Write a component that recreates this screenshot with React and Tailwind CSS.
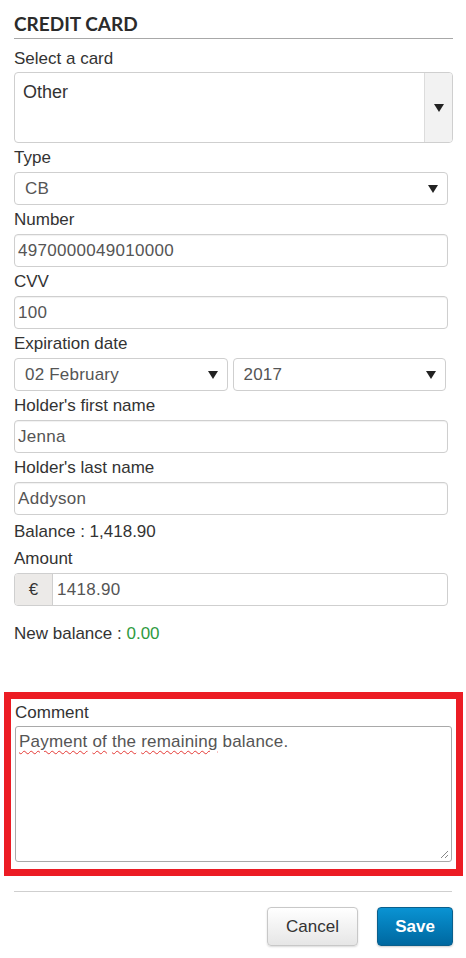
import React from "react";

const Arrow = ({ className = "" }) => (
  <svg width="10" height="8" viewBox="0 0 10 8" className={className}>
    <path d="M0 0 L10 0 L5 8 Z" fill="#222" />
  </svg>
);

function Label({ children }) {
  return <div className="pt-[5px] pb-[4px] text-[17px] leading-[20px] text-[#333]">{children}</div>;
}

function TextBox({ value, className = "" }) {
  return (
    <div
      className={`h-[33px] flex items-center pl-[3px] border border-[#cfcfcf] rounded-[4px] bg-white text-[17px] tracking-[0.3px] text-[#555] shadow-[inset_0_1px_1px_rgba(0,0,0,0.06)] ${className}`}
    >
      {value}
    </div>
  );
}

function SelectBox({ value, className = "" }) {
  return (
    <div
      className={`h-[33px] flex items-center justify-between pl-[10px] pr-[9px] border border-[#cfcfcf] rounded-[4px] bg-white text-[17px] tracking-[0.2px] text-[#555] ${className}`}
    >
      <span>{value}</span>
      <Arrow />
    </div>
  );
}

export default function App() {
  return (
    <div
      className="w-[466px] h-[958px] bg-white overflow-hidden"
      style={{ fontFamily: '"Liberation Sans", Arial, sans-serif' }}
    >
      <div className="pl-[14px] pr-[13px]">
        <div className="pt-[12px] pb-[2px] border-b border-[#a8a8a8]">
          <h1
            className="text-[19px] leading-[24px] font-bold text-[#2b2b2b]"
            style={{ fontFamily: "Lato, sans-serif" }}
          >
            CREDIT CARD
          </h1>
        </div>

        <div className="pt-[10px] pb-[3px] text-[17px] leading-[20px] text-[#333]">Select a card</div>
        <div className="h-[71px] flex border border-[#cfcfcf] rounded-[4px] bg-white overflow-hidden">
          <div className="flex-1 pl-[8px] pt-[9px] text-[18px] leading-[20px] text-[#333]">Other</div>
          <div className="w-[28px] flex items-center justify-center border-l border-[#dcdcdc] bg-[#f2f2f2]">
            <Arrow />
          </div>
        </div>

        <div className="mr-[5px]">
          <Label>Type</Label>
          <SelectBox value="CB" />

          <Label>Number</Label>
          <TextBox value="4970000049010000" />

          <Label>CVV</Label>
          <TextBox value="100" />

          <Label>Expiration date</Label>
          <div className="flex gap-[5px] mr-[2px]">
            <SelectBox value="02 February" className="flex-1" />
            <SelectBox value="2017" className="flex-1" />
          </div>

          <Label>Holder's first name</Label>
          <TextBox value="Jenna" />

          <Label>Holder's last name</Label>
          <TextBox value="Addyson" />

          <div className="pt-[7px] text-[17px] leading-[20px] text-[#333]">Balance : 1,418.90</div>
          <div className="pt-[7px] pb-[4px] text-[17px] leading-[20px] text-[#333]">Amount</div>
          <div className="h-[33px] flex border border-[#cfcfcf] rounded-[4px] bg-white overflow-hidden">
            <div className="w-[38px] flex items-center justify-center bg-[#eceae8] border-r border-[#cfcfcf] text-[17px] text-[#333]">
              €
            </div>
            <div className="flex-1 flex items-center pl-[4px] text-[17px] tracking-[0.3px] text-[#555]">1418.90</div>
          </div>

          <div className="pt-[18px] text-[17px] leading-[20px] text-[#333]">
            New balance : <span className="text-[#2e9a3e]">0.00</span>
          </div>
        </div>
      </div>

      <div className="mt-[48px] mx-[4px] border-[7px] border-[#ec1c24] px-[4px] pt-[4px] pb-[7px] w-[459px]">
        <div className="pb-[3px] text-[17px] leading-[20px] text-[#333]">Comment</div>
        <div className="relative h-[136px] border border-[#a9a9a9] rounded-[3px] bg-white px-[3px] pt-[5px] text-[17px] leading-[20px] tracking-[0.2px] text-[#555]">
          <span className="underline decoration-wavy decoration-[#e53935] decoration-1 underline-offset-[3px]">Payment</span>{" "}
          <span className="underline decoration-wavy decoration-[#e53935] decoration-1 underline-offset-[3px]">of</span>{" "}
          <span className="underline decoration-wavy decoration-[#e53935] decoration-1 underline-offset-[3px]">the</span>{" "}
          <span className="underline decoration-wavy decoration-[#e53935] decoration-1 underline-offset-[3px]">remaining</span>{" "}
          balance.
          <svg width="9" height="9" viewBox="0 0 9 9" className="absolute right-[2px] bottom-[2px]">
            <path d="M8 1 L1 8 M8 5 L5 8" stroke="#888" strokeWidth="1" />
          </svg>
        </div>
      </div>

      <div className="mt-[15px] mx-[14px] border-t border-[#cfcfcf]" />

      <div className="flex justify-end gap-[19px] pr-[13px] pt-[15px]">
        <button className="h-[39px] w-[91px] rounded-[4px] border border-[#c8c8c8] bg-gradient-to-b from-white to-[#e6e6e6] text-[17px] text-[#333] shadow-[0_1px_2px_rgba(0,0,0,0.15)]">
          Cancel
        </button>
        <button className="h-[39px] w-[76px] rounded-[4px] border border-[#0a5f8c] bg-gradient-to-b from-[#0a93d3] to-[#0068a0] text-[17px] font-bold text-white shadow-[0_1px_2px_rgba(0,0,0,0.2)]">
          Save
        </button>
      </div>
    </div>
  );
}
